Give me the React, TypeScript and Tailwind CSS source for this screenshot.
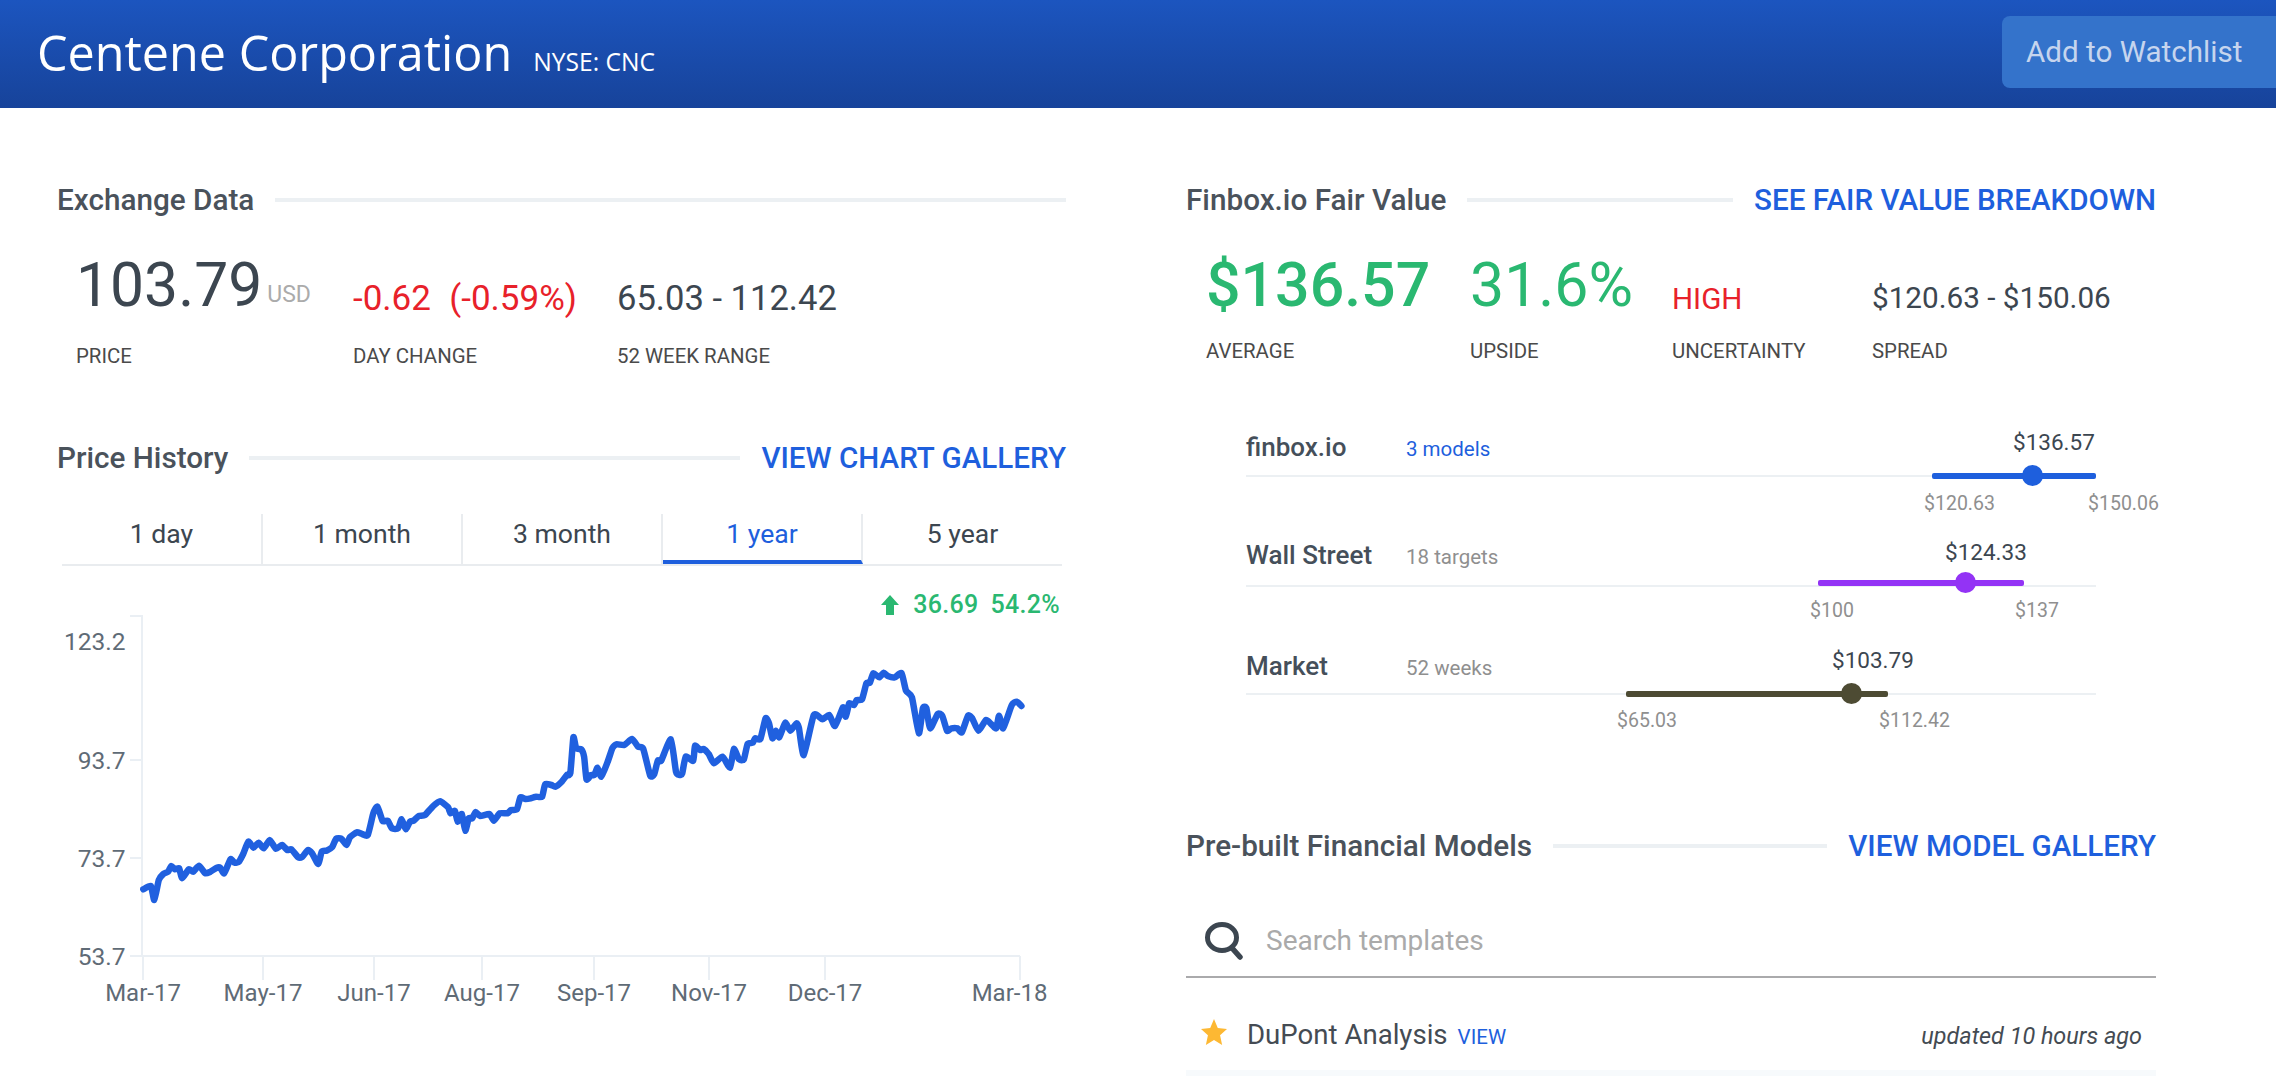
import type { ReactNode } from "react";

const a4: number[][] = [[300,868],[322,858],[332,900],[345,840],[358,822],[372,815],[381,798],[392,808],[404,805],[413,835],[432,808],[445,815],[462,797],[480,820],[495,815],[512,804],[523,803],[535,820],[553,778],[565,788],[578,785],[590,762],[605,725],[620,743],[635,728],[650,745],[667,720],[685,746],[703,735],[718,750],[730,748],[750,772],[762,770],[778,750],[790,760],[808,792],[818,755],[832,752],[848,742],[860,716],[875,716],[890,735],[900,712],[920,697],[935,702],[952,705],[968,640],[980,620],[995,663],[1010,662],[1022,685],[1040,685],[1050,658],[1062,688],[1075,664],[1085,662],[1100,648],[1118,645],[1140,620],[1162,604],[1185,622],[1192,640],[1205,633],[1213,665],[1225,642],[1235,692],[1245,655],[1255,655],[1265,636],[1278,648],[1305,642],[1318,662],[1335,640],[1358,640],[1368,630],[1385,628],[1395,592],[1410,597],[1425,595],[1440,590],[1458,590],[1467,553],[1485,555],[1497,560],[1515,545],[1530,525],[1540,520]];
const a5: number[][] = [[97,412],[105,445],[120,448],[128,470],[135,538],[148,525],[158,525],[167,503],[178,530],[195,490],[210,445],[222,433],[245,435],[267,417],[285,440],[300,447],[320,527],[332,522],[342,482],[352,482],[380,418],[395,515],[405,525],[413,520],[423,470],[445,482],[450,437],[465,450],[475,447],[490,462],[505,490],[530,470],[552,503],[563,447],[578,478],[592,478],[603,432],[618,428],[625,415],[640,417],[655,355],[665,370],[675,415],[685,392],[695,412],[712,368],[727,392],[745,370],[752,385],[766,465],[795,345],[820,358],[840,345],[857,378],[880,322],[888,350],[898,310],[912,315],[920,300],[935,298],[948,250],[958,248],[968,220],[985,232],[998,218],[1010,228],[1030,232],[1050,220],[1063,272],[1080,292],[1100,400],[1112,325],[1122,325],[1133,385],[1155,342],[1168,347],[1182,392],[1195,385],[1212,385],[1225,397],[1243,347],[1255,355],[1273,392],[1295,360],[1310,372],[1325,385],[1333,347],[1345,385],[1370,315],[1385,305],[1398,318]];

const OX = 62;
const OY = 610;
const all = [
  ...a4.map(([x, y]) => [40 + x / 2.904 - OX, 600 + y / 3 - OY]),
  ...a5.map(([x, y]) => [540 + x / 2.904 - OX, 600 + y / 3 - OY]),
];
const T = 0.55 / 6;
const linePath = all.reduce((d, p, i) => {
  if (i === 0) return `M${p[0].toFixed(1)} ${p[1].toFixed(1)}`;
  const p0 = all[Math.max(i - 2, 0)];
  const p1 = all[i - 1];
  const p3 = all[Math.min(i + 1, all.length - 1)];
  const c1x = p1[0] + (p[0] - p0[0]) * T;
  const c1y = p1[1] + (p[1] - p0[1]) * T;
  const c2x = p[0] - (p3[0] - p1[0]) * T;
  const c2y = p[1] - (p3[1] - p1[1]) * T;
  return `${d}C${c1x.toFixed(1)} ${c1y.toFixed(1)} ${c2x.toFixed(1)} ${c2y.toFixed(1)} ${p[0].toFixed(1)} ${p[1].toFixed(1)}`;
}, "");

const xTicks: [number, string][] = [[143,"Mar-17"],[263,"May-17"],[374,"Jun-17"],[482,"Aug-17"],[594,"Sep-17"],[709,"Nov-17"],[825,"Dec-17"],[1020,"Mar-18"]];
const yTicks: [number, number, string][] = [[616,650,"123.2"],[760,769,"93.7"],[858,867,"73.7"],[956,965,"53.7"]];

function Heading({ title, link }: { title: string; link?: string }) {
  return (
    <div className="flex h-[40px] items-center">
      <h2 className="whitespace-nowrap text-[29.7px] font-medium text-[#4a525b]">{title}</h2>
      <div className={link ? "mx-[21px] h-[4px] flex-1 bg-[#ecf0f3]" : "ml-[21px] h-[4px] flex-1 bg-[#ecf0f3]"} />
      {link && <a className="whitespace-nowrap text-[29.6px] font-medium text-[#1e5fdd]">{link}</a>}
    </div>
  );
}

function Stat({ className, value, label, labelTop }: { className: string; value: ReactNode; label: string; labelTop: string }) {
  return (
    <div className={className}>
      <div className="flex h-[70px] items-end whitespace-nowrap">{value}</div>
      <div className={`whitespace-nowrap text-[20.4px] leading-[24px] text-[#4a4a4a] ${labelTop}`}>{label}</div>
    </div>
  );
}

export default function App() {
  const tabs = ["1 day", "1 month", "3 month", "1 year", "5 year"];
  return (
    <div className="h-[1076px] w-[2276px] overflow-hidden bg-white font-['Roboto',sans-serif] text-[#3c4650]">
      <header className="flex h-[108px] items-start justify-between bg-gradient-to-b from-[#1c55bf] to-[#17439a]">
        <div className="flex items-baseline pl-[37px] pt-[19px] font-['Open_Sans',sans-serif] text-white">
          <h1 className="text-[48.5px] leading-[66px]">Centene Corporation</h1>
          <span className="ml-[21px] text-[24.6px]">NYSE: CNC</span>
        </div>
        <button className="mt-[16px] flex h-[72px] w-[274px] items-center rounded-l-[8px] bg-[#3473cb] pl-[24px] text-[29.6px] text-[#c6d5ee]">
          Add to Watchlist
        </button>
      </header>

      <main className="flex gap-[120px] pl-[57px] pr-[120px] pt-[72px]">
        <section className="w-[1009px] shrink-0">
          <Heading title="Exchange Data" />
          <div className="flex pt-[31px]">
            <Stat
              className="w-[296px] pl-[19px]"
              labelTop="mt-[23px]"
              value={<><span className="text-[60.6px] leading-[70px] text-[#3c4650]">103.79</span><span className="mb-[9px] ml-[5px] text-[23px] text-[#ababab]">USD</span></>}
              label="PRICE"
            />
            <Stat
              className="w-[264px]"
              labelTop="mt-[23px]"
              value={<span className="-mb-[4px] text-[35px] text-[#e8212a]">-0.62&nbsp;&nbsp;<span className="ml-[1px]">(-0.59%)</span></span>}
              label="DAY CHANGE"
            />
            <Stat
              className="w-[300px]"
              labelTop="mt-[23px]"
              value={<span className="-mb-[4px] text-[34.6px]">65.03 - 112.42</span>}
              label="52 WEEK RANGE"
            />
          </div>

          <div className="mt-[70px]">
            <Heading title="Price History" link="VIEW CHART GALLERY" />
          </div>
          <div className="ml-[5px] mt-[36px] flex h-[52px] w-[1000px] border-b-2 border-[#e9ecef]">
            {tabs.map((t, i) => (
              <div
                key={t}
                className={
                  t === "1 year"
                    ? "flex h-[50px] w-[200px] items-center justify-center border-b-4 border-r-2 border-b-[#1e5fdd] border-r-[#e9ecef] pb-[6px] text-[26.6px] text-[#1e5fdd]"
                    : i === 4
                    ? "flex h-[50px] w-[199px] items-center justify-center pb-[10px] text-[26.6px]"
                    : i === 0
                    ? "flex h-[50px] w-[201px] items-center justify-center border-r-2 border-[#e9ecef] pb-[10px] text-[26.6px]"
                    : "flex h-[50px] w-[200px] items-center justify-center border-r-2 border-[#e9ecef] pb-[10px] text-[26.6px]"
                }
              >
                {t}
              </div>
            ))}
          </div>
          <div className="ml-[5px] mt-[23px] flex h-[32px] w-[1000px] items-center justify-end gap-[12px] pr-[2px] text-[25px] font-medium tracking-[0.3px] text-[#2ab871]">
            <svg width="18" height="20" viewBox="0 0 18 20" className="mr-[2px]"><path d="M9 0 L18 10 L13 10 L13 20 L5 20 L5 10 L0 10 Z" fill="#2ab871" /></svg>
            <span>36.69</span>
            <span>54.2%</span>
          </div>
          <svg width="1010" height="420" viewBox="0 0 1010 420" className="-mt-[11px] ml-[5px] block font-['Roboto',sans-serif]">
            <g fill="none" stroke="#eaeff4" strokeWidth="2">
              <path d={`M${130 - OX} ${616 - OY}H${142 - OX}V${956 - OY}`} />
              <path d={`M${130 - OX} ${956 - OY}H${1020 - OX}`} />
              {yTicks.slice(1, 3).map(([y]) => <path key={y} d={`M${130 - OX} ${y - OY}H${142 - OX}`} />)}
              {xTicks.map(([x]) => <path key={x} d={`M${x - OX} ${956 - OY}V${980 - OY}`} />)}
            </g>
            {yTicks.map(([, y, l]) => (
              <text key={l} x={125.5 - OX} y={y - OY} textAnchor="end" fontSize="24.5" fill="#5f6b76">{l}</text>
            ))}
            {xTicks.map(([x, l]) => (
              <text key={l} x={(l === "Mar-18" ? 1009.5 : x) - OX} y={1001 - OY} textAnchor="middle" fontSize="24" fill="#5f6b76">{l}</text>
            ))}
            <path d={linePath} fill="none" stroke="#2060df" strokeWidth="6.5" strokeLinejoin="round" strokeLinecap="round" />
          </svg>
        </section>

        <section className="w-[970px] shrink-0">
          <Heading title="Finbox.io Fair Value" link="SEE FAIR VALUE BREAKDOWN" />
          <div className="flex pt-[31px]">
            <Stat className="w-[284px] pl-[20px]" labelTop="mt-[18px]" value={<span className="text-[60.8px] font-medium leading-[70px] text-[#2ab871]">$136.57</span>} label="AVERAGE" />
            <Stat className="w-[202px]" labelTop="mt-[18px]" value={<span className="text-[60.8px] leading-[70px] text-[#2ab871]">31.6%</span>} label="UPSIDE" />
            <Stat className="w-[200px]" labelTop="mt-[18px]" value={<span className="text-[29.6px] text-[#e8212a]">HIGH</span>} label="UNCERTAINTY" />
            <Stat className="w-[284px]" labelTop="mt-[18px]" value={<span className="text-[29.7px]">$120.63 - $150.06</span>} label="SPREAD" />
          </div>

          <div className="ml-[60px] mt-[59px] w-[850px]">
            <div className="relative h-[110px]">
              <div className="flex h-[50px] items-center">
                <span className="w-[160px] text-[26px] font-medium text-[#454f5a]">finbox.io</span>
                <span className="mt-[4px] text-[20.5px] text-[#1e5fdd]">3 models</span>
              </div>
              <div className="absolute inset-x-0 top-[53px] h-[2px] bg-[#ecf0f3]" />
              <div className="absolute left-[686px] top-[51px] h-[6px] w-[164px] rounded-[2px] bg-[#1e5fdd]" />
              <div className="absolute left-[776px] top-[43px] h-[21px] w-[21px] rounded-full bg-[#1e5fdd]" />
              <span className="absolute left-[767px] top-[6px] text-[22.5px] leading-[28px]">$136.57</span>
              <span className="absolute left-[678px] top-[70px] text-[19.5px] leading-[24px] text-[#8f8f8f]">$120.63</span>
              <span className="absolute left-[842px] top-[70px] text-[19.5px] leading-[24px] text-[#8f8f8f]">$150.06</span>
            </div>
            <div className="relative h-[110px]">
              <div className="flex h-[46px] items-center">
                <span className="w-[160px] text-[26px] font-medium text-[#454f5a]">Wall Street</span>
                <span className="mt-[4px] text-[20.5px] text-[#8f8f8f]">18 targets</span>
              </div>
              <div className="absolute inset-x-0 top-[53px] h-[2px] bg-[#ecf0f3]" />
              <div className="absolute left-[572px] top-[48px] h-[6px] w-[206px] rounded-[2px] bg-[#9333f5]" />
              <div className="absolute left-[709px] top-[40px] h-[21px] w-[21px] rounded-full bg-[#9333f5]" />
              <span className="absolute left-[699px] top-[6px] text-[22.5px] leading-[28px]">$124.33</span>
              <span className="absolute left-[564px] top-[67px] text-[19.5px] leading-[24px] text-[#8f8f8f]">$100</span>
              <span className="absolute left-[769px] top-[67px] text-[19.5px] leading-[24px] text-[#8f8f8f]">$137</span>
            </div>
            <div className="relative h-[110px]">
              <div className="flex h-[48px] items-center">
                <span className="w-[160px] text-[26px] font-medium text-[#454f5a]">Market</span>
                <span className="mt-[4px] text-[20.5px] text-[#8f8f8f]">52 weeks</span>
              </div>
              <div className="absolute inset-x-0 top-[51px] h-[2px] bg-[#ecf0f3]" />
              <div className="absolute left-[380px] top-[49px] h-[6px] w-[262px] rounded-[2px] bg-[#4d4b33]" />
              <div className="absolute left-[595px] top-[41px] h-[21px] w-[21px] rounded-full bg-[#4d4b33]" />
              <span className="absolute left-[586px] top-[4px] text-[22.5px] leading-[28px]">$103.79</span>
              <span className="absolute left-[371px] top-[67px] text-[19.5px] leading-[24px] text-[#8f8f8f]">$65.03</span>
              <span className="absolute left-[633px] top-[67px] text-[19.5px] leading-[24px] text-[#8f8f8f]">$112.42</span>
            </div>
          </div>

          <div className="mt-[74px]">
            <Heading title="Pre-built Financial Models" link="VIEW MODEL GALLERY" />
          </div>
          <div className="mt-[40px] flex h-[72px] items-center border-b-2 border-[#aaaaac] pl-[19px]">
            <svg width="38" height="38" viewBox="0 0 38 38" className="shrink-0">
              <ellipse cx="17" cy="15.5" rx="14.5" ry="13" fill="none" stroke="#3c4650" strokeWidth="5" />
              <path d="M27 26 L35 35" stroke="#3c4650" strokeWidth="5.5" strokeLinecap="round" />
            </svg>
            <span className="ml-[23px] text-[28px] text-[#aaaaaa]">Search templates</span>
          </div>
          <div className="flex h-[92px] items-center pl-[15px] pr-[14px] pt-[22px]">
            <svg width="26" height="26" viewBox="0 0 24 24" className="mb-[6px] shrink-0"><path d="M12 0 L15.5 8.4 L24 9.2 L17.6 15 L19.5 24 L12 19.3 L4.5 24 L6.4 15 L0 9.2 L8.5 8.4 Z" fill="#fdb833" /></svg>
            <span className="ml-[20px] text-[27.6px] text-[#444b53]">DuPont Analysis</span>
            <span className="ml-[10px] mt-[4px] text-[20.5px] text-[#1e5fdd]">VIEW</span>
            <span className="ml-auto mt-[4px] text-[23.4px] italic text-[#444b53]">updated 10 hours ago</span>
          </div>
          <div className="h-[10px] bg-[#f7fafc]" />
        </section>
      </main>
    </div>
  );
}
